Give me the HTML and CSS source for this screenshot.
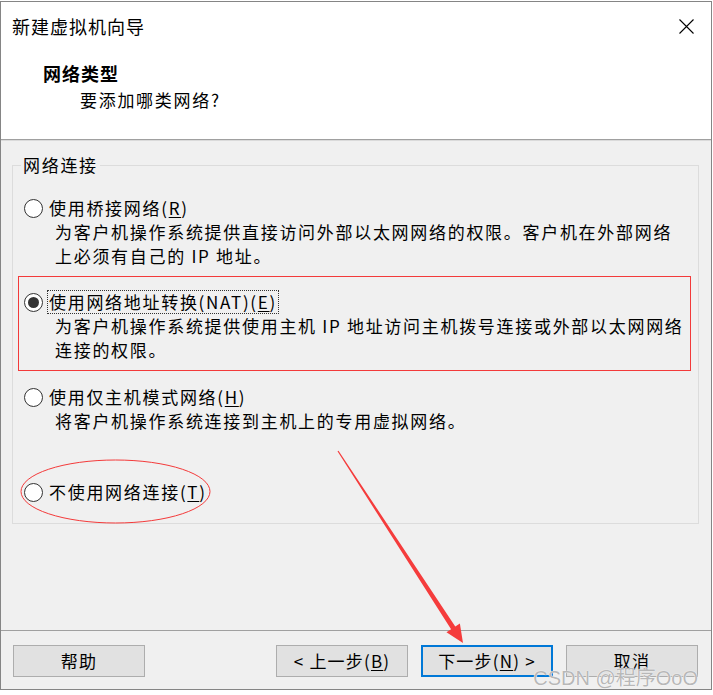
FILE: index.html
```html
<!DOCTYPE html>
<html lang="zh-CN">
<head>
<meta charset="utf-8">
<title>新建虚拟机向导</title>
<link rel="stylesheet" href="styles.css">
</head>
<body>
<div class="window">
  <header class="head">
    <div class="titlebar">
      <span class="title">新建虚拟机向导</span>
      <svg class="close" width="15" height="15" viewBox="0 0 15 15"><path d="M0.5 0.5 L14.5 14.5 M14.5 0.5 L0.5 14.5" stroke="#000" stroke-width="1.1" fill="none"/></svg>
    </div>
    <div class="page-title">网络类型</div>
    <div class="page-sub">要添加哪类网络?</div>
  </header>
  <main class="main">
    <fieldset class="group">
      <legend class="legend">网络连接</legend>
      <div class="opt">
        <div class="row"><span class="radio"></span><span class="lbl">使用桥接网络(<u>R</u>)</span></div>
        <div class="desc">为客户机操作系统提供直接访问外部以太网网络的权限。客户机在外部网络</div>
        <div class="desc">上必须有自己的 IP 地址。</div>
      </div>
      <div class="opt opt-marked">
        <div class="row"><span class="radio radio-on"></span><span class="lbl lbl-focus">使用网络地址转换(NAT)(<u>E</u>)</span></div>
        <div class="desc">为客户机操作系统提供使用主机 IP 地址访问主机拨号连接或外部以太网网络</div>
        <div class="desc">连接的权限。</div>
      </div>
      <div class="opt opt-host">
        <div class="row"><span class="radio"></span><span class="lbl">使用仅主机模式网络(<u>H</u>)</span></div>
        <div class="desc">将客户机操作系统连接到主机上的专用虚拟网络。</div>
      </div>
      <div class="opt opt-none">
        <div class="row"><span class="radio"></span><span class="lbl">不使用网络连接(<u>T</u>)</span></div>
      </div>
    </fieldset>
  </main>
  <footer class="foot">
    <button class="btn">帮助</button>
    <button class="btn btn-back">&lt; 上一步(<u>B</u>)</button>
    <button class="btn btn-default">下一步(<u>N</u>) &gt;</button>
    <button class="btn">取消</button>
  </footer>
  <div class="watermark">CSDN @程序OoO</div>
</div>
<svg class="annot" width="713" height="695" viewBox="0 0 713 695">
  <ellipse cx="115.5" cy="491.5" rx="94.5" ry="31.5" fill="none" stroke="#f43a3a" stroke-width="1"/>
  <polygon points="338.5,450.67 455.28,626.56 459.88,623.55 463,643 446.48,632.29 451.09,629.28 337.5,451.33" fill="#f53c3c"/>
</svg>
</body>
</html>
```
FILE: styles.css
```css
* { box-sizing: border-box; }

html, body {
  margin: 0;
  padding: 0;
  background: #ffffff;
}

body {
  position: relative;
  padding-top: 1px;
  width: 713px;
  height: 695px;
  font-family: "Noto Sans CJK SC", "Noto Sans", sans-serif;
  font-size: 17px;
  color: #000;
  overflow: hidden;
}

.window {
  position: relative;
  width: 712px;
  height: 689px;
  border: 1px solid #858585;
  display: flex;
  flex-direction: column;
  background: #f0f0f0;
}

.head {
  height: 138px;
  background: #ffffff;
  border-bottom: 1px solid #a0a0a0;
  flex: none;
}

.titlebar {
  height: 48px;
  display: flex;
  align-items: center;
  justify-content: space-between;
  padding: 0 17px 0 11px;
}

.title {
  font-size: 18px;
  letter-spacing: 1px;
  line-height: 48px;
}

.close {
  display: block;
  margin-top: 1px;
}

.page-title {
  margin-top: 11px;
  padding-left: 42px;
  line-height: 24px;
  font-size: 18px;
  font-weight: bold;
  letter-spacing: 1px;
}

.page-sub {
  margin-top: 3px;
  padding-left: 79px;
  line-height: 24px;
  letter-spacing: 1.7px;
}

.main {
  flex: 1;
  border-top: 1px solid #dadada;
  padding: 12px 12px 0 11px;
}

.group {
  margin: 0;
  min-width: 0;
  border: 1px solid #dcdcdc;
  padding: 19px 11px 19px 11px;
}

.legend {
  padding: 0 2px;
  margin-left: -3px;
  line-height: 24px;
  letter-spacing: 1.7px;
}

.opt {
  white-space: nowrap;
}

.row {
  display: flex;
  align-items: center;
  height: 24px;
}

.radio {
  position: relative;
  width: 19px;
  height: 19px;
  border: 1px solid #333;
  border-radius: 50%;
  background: #fff;
  flex: none;
  margin-right: 4px;
}

.radio-on::after {
  content: "";
  position: absolute;
  left: 3px;
  top: 3px;
  width: 11px;
  height: 11px;
  border-radius: 50%;
  background: #333;
}

.lbl {
  border: 1px solid transparent;
  padding: 0 1px;
  line-height: 22px;
  letter-spacing: 1.7px;
}

.lbl-focus {
  border: 1px dotted #333;
}

.lbl u, .btn u {
  text-decoration-thickness: 1px;
  text-underline-offset: 2px;
}

.desc {
  padding-left: 31px;
  line-height: 24px;
  letter-spacing: 1.7px;
}

.opt-marked {
  margin: 8px -4px 0 -6px;
  border: 1px solid #f33a3a;
  padding: 13px 3px 8px 5px;
}

.opt-host {
  margin-top: 14px;
}

.opt-none {
  margin-top: 47px;
}

.foot {
  flex: none;
  height: 59px;
  border-top: 1px solid #a0a0a0;
  padding: 14px 13px 12px 12px;
  display: flex;
  gap: 13px;
}

.btn {
  width: 132px;
  height: 32px;
  background: #e1e1e1;
  border: 1px solid #adadad;
  font-family: "Noto Sans CJK SC", "Noto Sans", sans-serif;
  font-size: 17px;
  letter-spacing: 1.2px;
  color: #000;
  padding: 0;
  line-height: 28px;
}

.btn-back {
  margin-left: auto;
}

.btn-default {
  border: 2px solid #0078d7;
}

.watermark {
  position: absolute;
  right: 13px;
  bottom: 0;
  font-family: "Liberation Sans", "Noto Sans CJK SC", sans-serif;
  font-size: 20px;
  line-height: 22px;
  color: #b8b8b8;
  text-shadow: 0 0 1px #fff, 0 0 1px #fff;
  pointer-events: none;
}

.annot {
  position: absolute;
  left: 0;
  top: 0;
  pointer-events: none;
}
```
